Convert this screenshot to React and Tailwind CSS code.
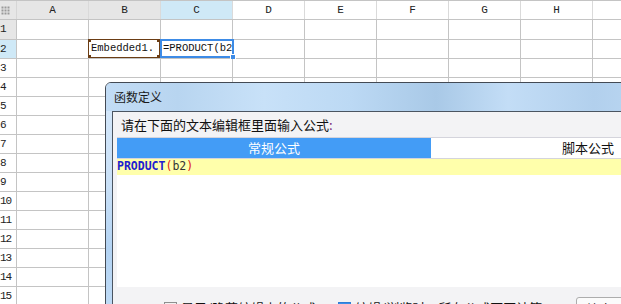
import React from "react";

const COLS = ["A", "B", "C", "D", "E", "F", "G", "H"];
const ROWS = Array.from({ length: 15 }, (_, i) => i + 1);

const mono = "font-['Liberation_Mono',monospace]";
const cjk = "font-['Noto_Sans_CJK_SC','Noto_Sans',sans-serif]";

const headerBg = (c) => {
  if (c === "A" || c === "B") return "bg-[#e6e6e6]";
  if (c === "C") return "bg-[#cfe9f7]";
  return "bg-white";
};

const rowBg = (r) => {
  if (r === 1) return "bg-[#e6e6e6]";
  if (r === 2) return "bg-[#cfe9f7]";
  return "bg-white";
};

const Grip = () => (
  <svg width="9" height="9" viewBox="0 0 9 9">
    {[0, 3, 6].map((x) =>
      [0, 3, 6].map((y) => (
        <rect key={`${x}-${y}`} x={x + 0.5} y={y + 0.5} width="2" height="2" fill="#9a9a9a" />
      ))
    )}
  </svg>
);

const Cell = ({ col, row }) => {
  if (row === 2 && col === "B") {
    return (
      <div className="relative w-[72px] h-full border-r border-[#c4c4c4] flex items-center pl-[2px] overflow-visible">
        <span className={`${mono} text-[10.5px] text-[#111] whitespace-nowrap`}>Embedded1.</span>
        <div className="absolute -left-[1px] -top-[1px] w-[72px] h-[19px] border border-[#6b3d14]" />
        <div className="absolute -left-[1px] -top-[1px] w-[3px] h-[3px] bg-[#6b3d14]" />
        <div className="absolute left-[68px] -top-[1px] w-[3px] h-[3px] bg-[#6b3d14]" />
        <div className="absolute -left-[1px] top-[15px] w-[3px] h-[3px] bg-[#6b3d14]" />
        <div className="absolute left-[68px] top-[15px] w-[3px] h-[3px] bg-[#6b3d14]" />
      </div>
    );
  }
  if (row === 2 && col === "C") {
    return (
      <div className="relative w-[72px] h-full border-r border-[#c4c4c4] flex items-center pl-[2px] overflow-hidden">
        <span className={`${mono} text-[10.5px] text-[#111] whitespace-nowrap`}>=PRODUCT(b2</span>
      </div>
    );
  }
  return <div className="w-[72px] h-full border-r border-[#c4c4c4]" />;
};

const Sheet = () => (
  <div className="flex flex-col">
    <div className="flex h-[20px] border-t border-b border-[#c4c4c4]">
      <div className="w-[17px] h-full bg-[#e6e6e6] border-r border-[#d6d6d6] flex items-center pl-[1px]">
        <Grip />
      </div>
      {COLS.map((c) => (
        <div
          key={c}
          className={`w-[72px] h-full border-r border-[#dadada] flex items-center justify-center ${headerBg(c)} ${mono} text-[11px] text-[#222]`}
        >
          {c}
        </div>
      ))}
      <div className="flex-1 h-full bg-white" />
    </div>
    {ROWS.map((r) => (
      <div
        key={r}
        className={`relative flex border-b border-[#c4c4c4] ${r === 1 ? "h-[20px]" : "h-[19px]"}`}
      >
        <div
          className={`w-[17px] h-full border-r border-[#c4c4c4] flex items-center ${rowBg(r)} ${mono} text-[11px] tracking-[-1px] text-[#222]`}
        >
          {r}
        </div>
        {COLS.map((c) => (
          <Cell key={c} col={c} row={r} />
        ))}
        <div className="flex-1 h-full" />
        {r === 2 && (
          <>
            <div className="absolute left-[160px] -top-[1px] w-[74px] h-[19px] border-2 border-[#3d8be6]" />
            <div className="absolute left-[230px] top-[14px] w-[6px] h-[6px] bg-[#3d8be6] border border-white" />
          </>
        )}
      </div>
    ))}
  </div>
);

const Dialog = () => (
  <div className="absolute left-[105px] top-[82px] w-[720px] h-[260px] border border-[#434a54] rounded-tl-[6px] overflow-hidden flex flex-col bg-[linear-gradient(180deg,#d6e8fa_0%,#c9e0f7_40%,#b3d3f3_65%,#c6dff7_100%)]">
    <div className="h-[28px] shrink-0 flex items-center pl-[8px] bg-[linear-gradient(90deg,#c2dcf5_0%,#b8d5f0_10%,#c8e1f8_22%,#bcd9f4_34%,#a9c9e7_46%,#c3ddf6_56%,#b2d0ed_68%,#c0dbf5_80%,#c0dbf5_100%)]">
      <span className={`${cjk} text-[12px] text-[#1a1a1a] leading-none`}>函数定义</span>
    </div>
    <div className="flex-1 ml-[6px] border-l border-t border-[#4b5561] bg-[#f3f3f5] flex flex-col">
      <div className={`h-[25px] shrink-0 pt-[5px] pl-[8px] ${cjk} text-[13px] leading-[16px] text-[#111]`}>
        请在下面的文本编辑框里面输入公式<span className="text-[#7a2a7a]">:</span>
      </div>
      <div className="ml-[4px] flex flex-col">
        <div className="flex h-[22px] border-t border-b border-[#d4d4dc]">
          <div className={`w-[314px] shrink-0 bg-[#439cf6] text-white flex items-center justify-center ${cjk} text-[13px]`}>
            常规公式
          </div>
          <div className={`w-[314px] shrink-0 bg-white text-[#111] flex items-center justify-center ${cjk} text-[13px]`}>
            脚本公式
          </div>
        </div>
        <div className="h-[16px] bg-[#ffffab] flex items-center font-['DejaVu_Sans_Mono',monospace] text-[11.5px] leading-none">
          <span className="text-[#2020d0] font-bold">PRODUCT</span>
          <span className="text-[#e02020]">(</span>
          <span className="text-[#333]">b2</span>
          <span className="text-[#e02020]">)</span>
        </div>
        <div className="h-[112px] bg-white" />
      </div>
      <div className="flex items-start pl-[51px]">
        <div className="mt-[15px] w-[13px] h-[13px] border border-[#8e8f8f] bg-[linear-gradient(180deg,#f0f0f0,#ffffff)]" />
        <span className={`mt-[13px] ml-[4px] ${cjk} text-[13px] leading-[16px] text-[#111] whitespace-nowrap`}>
          显示/隐藏编辑中的公式
        </span>
        <div className="mt-[15px] ml-[22px] w-[13px] h-[13px] bg-[#3b8ee8] border border-[#2f7dd6]" />
        <span className={`mt-[13px] ml-[4px] ${cjk} text-[13px] leading-[16px] text-[#111] whitespace-nowrap`}>
          编辑/浏览时，所有公式不再计算
        </span>
        <div className={`mt-[10px] ml-[34px] h-[24px] px-[9px] border border-[#adadad] rounded-[3px] bg-[#fbfbfb] ${cjk} text-[13px] leading-[22px] text-[#111] whitespace-nowrap`}>
          检查公式
        </div>
      </div>
    </div>
  </div>
);

export default function App() {
  return (
    <div className="relative w-[621px] h-[304px] overflow-hidden bg-white">
      <Sheet />
      <Dialog />
    </div>
  );
}
